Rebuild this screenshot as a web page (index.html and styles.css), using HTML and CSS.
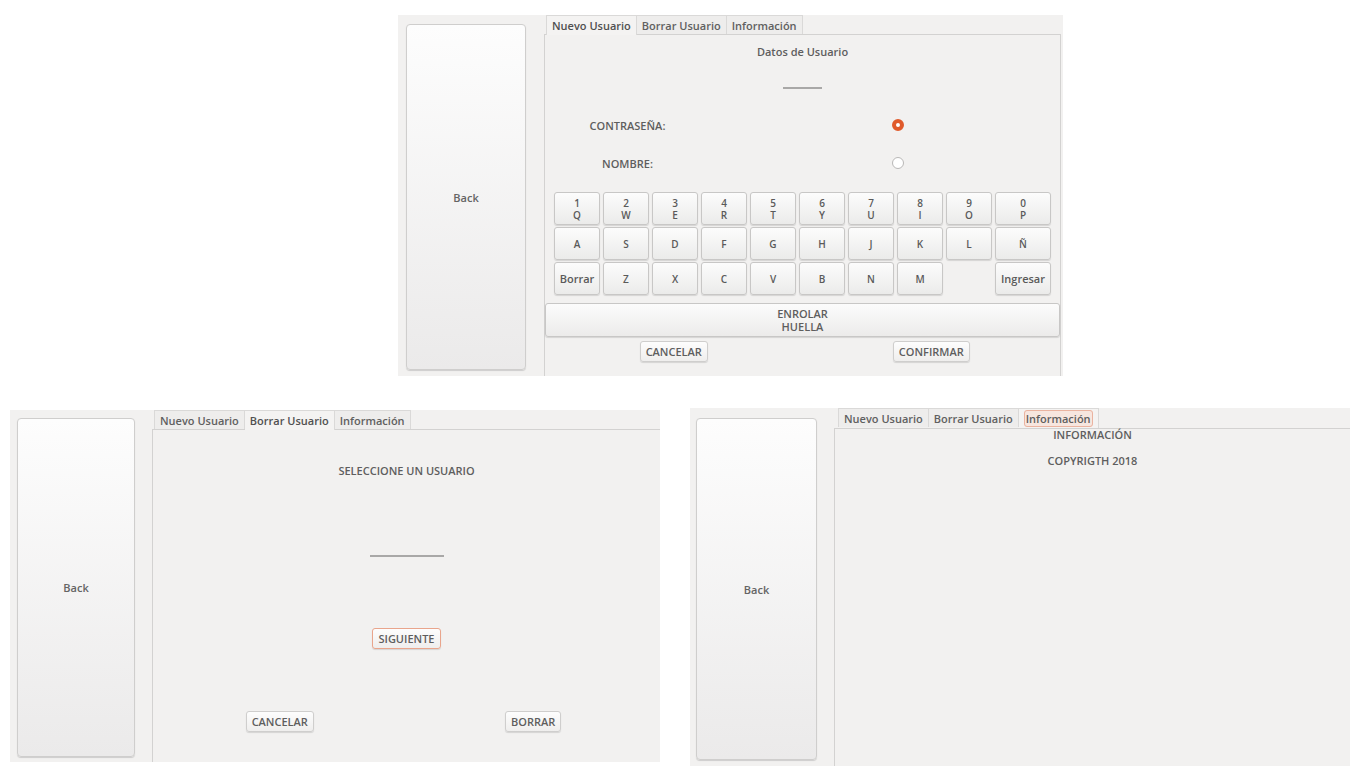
FILE: index.html
```html
<!DOCTYPE html>
<html lang="es">
<head>
  <meta charset="UTF-8" />
  <title>Usuarios</title>
  <link rel="stylesheet" href="styles.css">
</head>
<body>
  <div class="row-top">
    <div class="win win-top">
      <button class="back">Back</button>
      <div class="tabs">
        <div class="tabbar">
          <span class="tab active">Nuevo Usuario</span>
          <span class="tab">Borrar Usuario</span>
          <span class="tab">Información</span>
        </div>
        <div class="pane pane-new">
          <div class="title">Datos de Usuario</div>
          <div class="field-line short"></div>
          <div class="opt opt-first">
            <span class="opt-label">CONTRASEÑA:</span>
            <span class="radio checked"></span>
          </div>
          <div class="opt">
            <span class="opt-label">NOMBRE:</span>
            <span class="radio"></span>
          </div>

          <div class="keyboard">
            <button class="key">1<br>Q</button>
            <button class="key">2<br>W</button>
            <button class="key">3<br>E</button>
            <button class="key">4<br>R</button>
            <button class="key">5<br>T</button>
            <button class="key">6<br>Y</button>
            <button class="key">7<br>U</button>
            <button class="key">8<br>I</button>
            <button class="key">9<br>O</button>
            <button class="key">0<br>P</button>

            <button class="key">A</button>
            <button class="key">S</button>
            <button class="key">D</button>
            <button class="key">F</button>
            <button class="key">G</button>
            <button class="key">H</button>
            <button class="key">J</button>
            <button class="key">K</button>
            <button class="key">L</button>
            <button class="key">Ñ</button>

            <button class="key word">Borrar</button>
            <button class="key">Z</button>
            <button class="key">X</button>
            <button class="key">C</button>
            <button class="key">V</button>
            <button class="key">B</button>
            <button class="key">N</button>
            <button class="key">M</button>
            <span></span>
            <button class="key word">Ingresar</button>
          </div>

          <button class="enrolar">ENROLAR<br>HUELLA</button>

          <div class="actions actions-top">
            <div><button class="btn">CANCELAR</button></div>
            <div><button class="btn">CONFIRMAR</button></div>
          </div>
        </div>
      </div>
    </div>
  </div>

  <div class="row-bottom">
    <div class="win win-left">
      <button class="back">Back</button>
      <div class="tabs">
        <div class="tabbar">
          <span class="tab">Nuevo Usuario</span>
          <span class="tab active">Borrar Usuario</span>
          <span class="tab">Información</span>
        </div>
        <div class="pane pane-del">
          <div class="title">SELECCIONE UN USUARIO</div>
          <div class="field-line long"></div>
          <div class="next"><button class="btn focus">SIGUIENTE</button></div>
          <div class="actions actions-del">
            <div><button class="btn">CANCELAR</button></div>
            <div><button class="btn">BORRAR</button></div>
          </div>
        </div>
      </div>
    </div>

    <div class="win win-right">
      <button class="back">Back</button>
      <div class="tabs">
        <div class="tabbar">
          <span class="tab">Nuevo Usuario</span>
          <span class="tab">Borrar Usuario</span>
          <span class="tab active"><span class="focus-text">Información</span></span>
        </div>
        <div class="pane pane-info">
          <div class="info-head">INFORMACIÓN</div>
          <div class="info-copy">COPYRIGTH 2018</div>
        </div>
      </div>
    </div>
  </div>
</body>
</html>
```

FILE: styles.css
```css
body {
  margin: 0;
  background: #ffffff;
  font-family: "Open Sans", "DejaVu Sans", sans-serif;
  font-size: 11px;
  font-weight: 600;
  color: #5e5e5e;
}
button {
  font-family: inherit;
  font-weight: 600;
  color: #5e5e5e;
  cursor: pointer;
}

/* rows of screenshots */
.row-top {
  padding: 15px 0 0 398px;
}
.row-bottom {
  display: flex;
  align-items: flex-start;
  gap: 30px;
  padding: 34px 0 0 10px;
}

/* window */
.win {
  display: flex;
  background: #f2f1f0;
  box-sizing: border-box;
}
.win-top {
  width: 665px;
  height: 361px;
  padding-right: 2px;
}
.win-left {
  width: 650px;
  height: 352px;
  overflow: hidden;
}
.win-right {
  width: 660px;
  height: 358px;
  margin-top: -2px;
  overflow: hidden;
}

/* back button */
.back {
  flex: none;
  border: 1px solid #cfcecd;
  border-radius: 4px;
  background: linear-gradient(#fdfdfd, #ebeaea);
  box-shadow: 0 1px 1px rgba(0,0,0,0.15);
  font-size: 11px;
  color: #646464;
  padding: 0;
}
.win-top .back {
  width: 120px;
  margin: 9px 18px 6px 8px;
}
.win-left .back {
  width: 118px;
  margin: 8px 17px 5px 7px;
}
.win-right .back {
  width: 121px;
  margin: 10px 17px 6px 6px;
}

/* tab widget */
.tabs {
  flex: 1;
  display: flex;
  flex-direction: column;
  min-width: 0;
}
.tabbar {
  display: flex;
  height: 19px;
  padding-left: 2px;
}
.win-right .tabbar {
  height: 20px;
  padding-left: 4px;
}
.tab {
  height: 19px;
  line-height: 19px;
  padding: 0 5px;
  border: 1px solid #dad9d8;
  border-bottom: none;
  border-left: none;
  box-sizing: border-box;
  background: #eeedec;
  color: #606060;
  white-space: nowrap;
}
.tab:first-child {
  border-left: 1px solid #dad9d8;
}
.tab.active {
  background: #f4f3f2;
  height: 20px;
  margin-bottom: -1px;
  position: relative;
  color: #505050;
}
.focus-text {
  border: 1px solid #eab3a0;
  border-radius: 3px;
  background: #f7e6df;
  padding: 0 1px;
  color: #5e5e5e;
}
.pane {
  flex: 1;
  border: 1px solid #d3d2d1;
  border-bottom: none;
  display: flex;
  flex-direction: column;
  align-items: center;
}
.win-left .pane,
.win-right .pane {
  border-right: none;
}

.title {
  line-height: 14px;
}
.field-line {
  height: 2px;
  background: #a9a8a7;
}
.field-line.short {
  width: 39px;
  margin-top: 28px;
}
.field-line.long {
  width: 74px;
  margin-top: 77px;
}

/* new user */
.pane-new .title {
  margin-top: 10px;
}
.opt {
  align-self: stretch;
  display: grid;
  grid-template-columns: 165px 12px;
  column-gap: 182px;
  align-items: center;
  height: 20px;
  margin-top: 18px;
}
.opt-first {
  margin-top: 26px;
}
.opt-label {
  text-align: center;
}
.radio {
  width: 12px;
  height: 12px;
  border-radius: 50%;
  box-sizing: border-box;
  border: 1px solid #b9b8b7;
  background: #fff;
}
.radio.checked {
  border: 4px solid #e05a2b;
  background: #fff;
}

.keyboard {
  align-self: stretch;
  display: grid;
  grid-template-columns: repeat(9, 46px) 56px;
  grid-auto-rows: 33px;
  column-gap: 3px;
  row-gap: 2px;
  margin: 19px 0 0 9px;
}
.key {
  padding: 0;
  border: 1px solid #c8c7c6;
  border-radius: 3px;
  background: linear-gradient(#fcfcfc, #ebebea);
  box-shadow: 0 1px 1px rgba(0,0,0,0.12);
  font-size: 10px;
  line-height: 12px;
  color: #5a5a5a;
}
.key.word {
  font-size: 11px;
}

.enrolar {
  align-self: stretch;
  height: 34px;
  margin-top: 8px;
  padding: 0;
  border: 1px solid #c8c7c6;
  border-radius: 3px;
  background: linear-gradient(#fcfcfc, #ecebea);
  box-shadow: 0 1px 1px rgba(0,0,0,0.12);
  font-size: 11px;
  line-height: 13px;
}

.actions {
  align-self: stretch;
  display: grid;
  grid-template-columns: 1fr 1fr;
  text-align: center;
}
.actions-top {
  margin-top: 4px;
}
.btn {
  height: 21px;
  padding: 0 5px;
  border: 1px solid #cfcecd;
  border-radius: 3px;
  background: linear-gradient(#fdfdfd, #efeeed);
  box-shadow: 0 1px 1px rgba(0,0,0,0.12);
  font-size: 11px;
}
.btn.focus {
  border-color: #e9a58c;
}

/* delete user */
.pane-del .title {
  margin-top: 34px;
}
.next {
  margin-top: 71px;
}
.actions-del {
  margin-top: 62px;
}

/* info */
.info-head {
  margin-top: -1px;
  line-height: 14px;
}
.info-copy {
  margin-top: 12px;
  line-height: 14px;
}
```
